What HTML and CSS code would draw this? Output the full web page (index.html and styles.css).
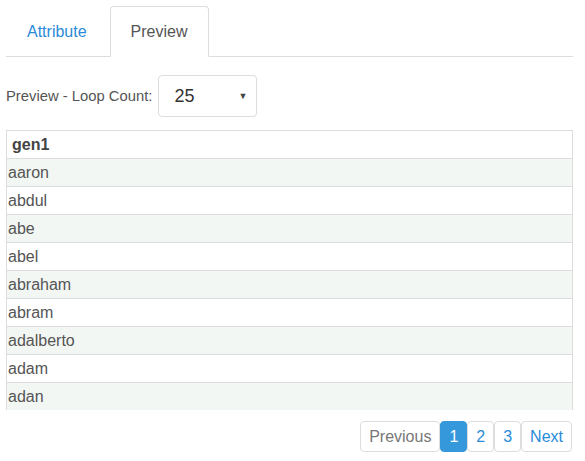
FILE: index.html
```
<!DOCTYPE html>
<html>
<head>
<meta charset="utf-8">
<link rel="stylesheet" href="styles.css">
</head>
<body>
<div class="page">
  <ul class="tabs">
    <li class="tab"><a href="#">Attribute</a></li>
    <li class="tab active"><a href="#">Preview</a></li>
  </ul>
  <div class="controls">
    <label class="label">Preview - Loop Count:</label>
    <div class="select"><span class="value">25</span><span class="arrow">▼</span></div>
  </div>
  <div class="scroll">
    <table class="grid">
      <thead><tr><th>gen1</th></tr></thead>
      <tbody>
        <tr><td>aaron</td></tr>
        <tr><td>abdul</td></tr>
        <tr><td>abe</td></tr>
        <tr><td>abel</td></tr>
        <tr><td>abraham</td></tr>
        <tr><td>abram</td></tr>
        <tr><td>adalberto</td></tr>
        <tr><td>adam</td></tr>
        <tr><td>adan</td></tr>
        <tr><td></td></tr>
      </tbody>
    </table>
  </div>
  <div class="pager">
    <a class="pg prev" href="#">Previous</a>
    <a class="pg active" href="#">1</a>
    <a class="pg" href="#">2</a>
    <a class="pg" href="#">3</a>
    <a class="pg" href="#">Next</a>
  </div>
</div>
</body>
</html>
```
FILE: styles.css
```
* { box-sizing: border-box; }
body {
  margin: 0;
  font-family: "Liberation Sans", Arial, sans-serif;
  color: #555;
  background: #fff;
}
.page {
  width: 567px;
  margin: 6px 0 0 6px;
}
.tabs {
  list-style: none;
  margin: 0;
  padding: 0;
  display: flex;
  border-bottom: 1px solid #ddd;
  height: 51px;
}
.tab {
  margin-right: 2px;
  margin-bottom: -1px;
}
.tab a {
  display: block;
  height: 51px;
  padding: 14px 20px 0;
  font-size: 16px;
  line-height: 22px;
  color: #2a8bd8;
  text-decoration: none;
  border: 1px solid transparent;
  border-radius: 4px 4px 0 0;
}
.tab.active a {
  color: #555;
  background: #fff;
  border-color: #ddd;
  border-bottom-color: #fff;
}
.controls {
  display: flex;
  align-items: center;
  margin-top: 18px;
  gap: 6px;
}
.label {
  font-size: 14.8px;
  color: #555;
}
.select {
  width: 99px;
  height: 42px;
  border: 1px solid #ddd;
  border-radius: 4px;
  display: flex;
  align-items: center;
  justify-content: space-between;
  padding: 0 9px 0 15px;
  color: #333;
}
.value { font-size: 18px; }
.arrow { font-size: 9px; color: #444; }
.scroll {
  margin-top: 13px;
  height: 280px;
  overflow: hidden;
}
.grid {
  width: 100%;
  border-collapse: collapse;
  border: 1px solid #ddd;
  font-size: 16px;
}
.grid th, .grid td {
  height: 28px;
  border-top: 1px solid #ddd;
  text-align: left;
  padding: 0 1px;
  color: #555;
}
.grid th {
  font-weight: bold;
  padding-left: 5px;
  color: #444;
}
.grid tbody tr:nth-child(odd) td { background: #f3f7f4; }
.pager {
  display: flex;
  justify-content: flex-end;
  gap: 0;
  margin-top: 11px;
  padding-right: 1px;
}
.pg {
  display: block;
  height: 31px;
  line-height: 29px;
  padding: 0 8px;
  font-size: 16px;
  border: 1px solid #ddd;
  border-radius: 4px;
  color: #2a8bd8;
  text-decoration: none;
}
.pg.prev { color: #777; }
.pg.active {
  background: #3498db;
  border-color: #3498db;
  color: #fff;
}
```
